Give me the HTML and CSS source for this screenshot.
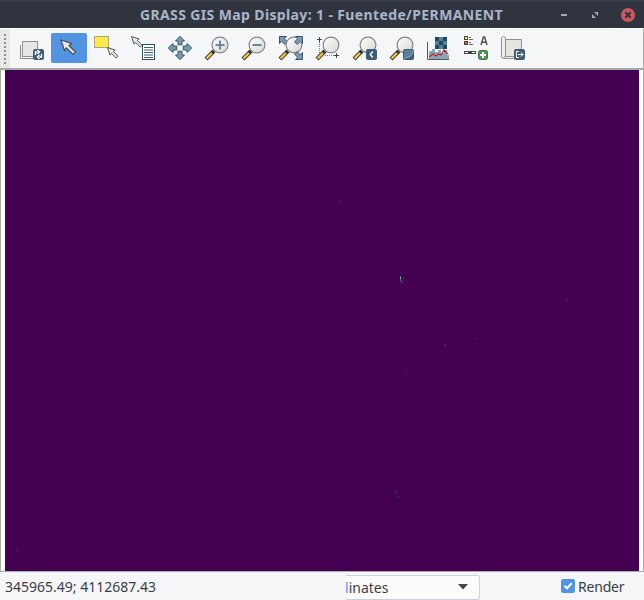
FILE: index.html
```
<!DOCTYPE html>
<html lang="en">
<head>
<meta charset="utf-8">
<title>GRASS GIS Map Display</title>
<link rel="stylesheet" href="styles.css">
</head>
<body>
<svg class="defs" width="0" height="0">
  <defs>
    <linearGradient id="glass" x1="0" y1="0" x2="1" y2="1"><stop offset="0" stop-color="#fff"/><stop offset="1" stop-color="#d5d5d3"/></linearGradient>
    <g id="lens" stroke-width="1">
      <path d="M1 23 9 15" stroke="#333" stroke-width="4"/>
      <path d="M1.6 22.4 7 17" stroke="#f5c83c" stroke-width="2.3"/>
      <circle cx="15" cy="9" r="7.9" fill="url(#glass)" stroke="#858585" stroke-width="1.2"/>
    </g>
    <path id="pointer" d="M0 0 10.5 3.5 8 5.500 14.500 12 12 14.500 5.500 8 3.500 10.500Z"/>
    <path id="arrow" d="M12 .3 16.500 5H14V8.800H10V5H7.500Z"/>
    <path id="corner" d="M.5.5H7.500L5.300 2.700 8.400 5.800 5.800 8.400 2.700 5.300.5 7.500Z"/>
    <rect id="badge" x="13" y="13" width="11" height="11" rx="2"/>
  </defs>
</svg>
<div class="window">
  <header class="titlebar">
    <h1 class="title">GRASS GIS Map Display: 1 - Fuentede/PERMANENT</h1>
    <div class="controls">
      <svg width="80" height="28" fill="#a3a9b5">
        <path d="M2 13h6v2H2Z"/>
        <path d="M35 11h4v4ZM33 13v4h4Z"/>
        <circle cx="69" cy="14" r="7" fill="#cc575d"/>
        <path d="m66.300 11.300 5.400 5.400m0-5.400-5.400 5.400" stroke="#2f343f" stroke-width="2"/>
      </svg>
    </div>
  </header>
  <nav class="toolbar">
    <div class="grip"></div>
    <span class="tool"><svg class="icon"><path d="M.5 9v13.500H14" fill="none" stroke="#8b8b8b"/><rect x="2.500" y="5.500" width="15" height="15" fill="#e6e6e6" stroke="#929292"/><use href="#badge" class="blue"/><path d="M15.500 19v-3h2m0-2 2 2-2 2M21.500 18v3h-2m0-2-2 2 2 2" class="mark"/></svg></span>
    <span class="tool active"><svg class="icon"><use href="#pointer" x="4" y="4" class="pointer"/></svg></span>
    <span class="tool"><svg class="icon"><rect x=".5" y=".5" width="14" height="11" fill="#ffe94e" stroke="#625c38" stroke-dasharray="1 1"/><use href="#pointer" class="pointer small" transform="translate(13.500 11.500) scale(.73)"/></svg></span>
    <span class="tool"><svg class="icon"><use href="#pointer" class="pointer small" transform="translate(.5 .5) scale(.73)"/><rect x="11.500" y="8.500" width="12" height="15" fill="#fff" stroke="#2f4e65"/><path d="M13 11.500h9m-9 2.500h9m-9 2.500h9m-9 2.500h9m-9 2.500h9" stroke="#3f5f75"/></svg></span>
    <span class="tool"><svg class="icon arrows"><use href="#arrow"/><use href="#arrow" transform="rotate(90 12 12)"/><use href="#arrow" transform="rotate(180 12 12)"/><use href="#arrow" transform="rotate(270 12 12)"/></svg></span>
    <span class="tool"><svg class="icon"><use href="#lens"/><path d="M15 4.500v9M10.500 9h9" stroke="#6689a0" stroke-width="2"/></svg></span>
    <span class="tool"><svg class="icon"><use href="#lens"/><path d="M10.500 9h9" stroke="#6689a0" stroke-width="2"/></svg></span>
    <span class="tool"><svg class="icon arrows"><use href="#corner"/><use href="#lens"/><use href="#corner" transform="matrix(-1 0 0 1 24 0)"/><use href="#corner" transform="matrix(-1 0 0 -1 24 24)"/></svg></span>
    <span class="tool"><svg class="icon"><path d="M3.500 6v14M9 19.500h9" fill="none" stroke="#777" stroke-dasharray="1 1"/><use href="#lens"/><path d="M3.500 1v5M1 3.500h5M20.500 17v5M18 19.500h5" stroke="#444"/></svg></span>
    <span class="tool"><svg class="icon"><use href="#lens"/><use href="#badge" class="blue"/><path d="m19.800 15.500-2.500 3 2.500 3" class="mark"/></svg></span>
    <span class="tool"><svg class="icon"><use href="#lens"/><use href="#badge" class="blue"/><path d="M14 14h9q0 7-9 8Z" fill="#5e7d94"/><path d="M14 22c5-.2 8-2 9-7" fill="none" stroke="#9db0be"/></svg></span>
    <span class="tool"><svg class="icon"><path d="M2 23v-8h3v-2h3v3h3v-2h3v3h3v-3h3v5h2v4Z" fill="#86a6b8"/><path d="M8 1h12v12H8Z" fill="#55809a"/><path d="M8 1h4v4H8Zm8 0h4v4h-4Zm-4 4h4v4h-4Zm-4 4h4v4H8Zm8 0h4v4h-4Z" fill="#234761"/><path d="M.5 6v17.500H22" fill="none" stroke="#555"/><path d="m2 21 4-3 3 2 3-2 2 1 3-5 4 4" fill="none" stroke="#c4222b" stroke-width="1.300"/></svg></span>
    <span class="tool"><svg class="icon"><rect x=".5" y=".5" width="3" height="3" fill="#ffe94e" stroke="#454545"/><rect x=".5" y="5.500" width="3" height="3" fill="#e25648" stroke="#454545"/><path d="M5 1.500h2M5 3.500h4M5 6.500h2M5 8.500h4" stroke="#666"/><path d="m17 9 2.400-8h1.200L23 9M18 6.200h4" fill="none" stroke="#555" stroke-width="1.500"/><path d="M0 15h12v3H0Z" fill="#444"/><path d="M1 16h3v1H1Zm7 0h3v1H8Z" fill="#fff"/><rect x="14.500" y="14.500" width="9" height="9" rx="2" fill="#4f9553" stroke="#3e7743"/><path d="M19 16v6m-3-3h6" stroke="#fff" stroke-width="2"/></svg></span>
    <span class="tool"><svg class="icon"><path d="M4.500 3.500H20.500V20.500H4.500Z" fill="#e4e4e2" stroke="#929292"/><path d="M.5 2C.5 0 4.500 0 4.500 2V19C4.500 22 .5 23 .5 21ZM2.500 22.500H14v-2H4" fill="#eee" stroke="#929292"/><use href="#badge" class="blue"/><path d="M18 15.500h-2.500v6H18M17 18.500h5m-2-2 2 2-2 2" class="mark thin"/></svg></span>
  </nav>
  <main class="viewport">
    <svg class="map" width="634" height="501" shape-rendering="crispEdges">
      <path d="M395 206h1v1h-1Z" fill="#2e6a80"/><path d="M395 207h1v1h-1Z" fill="#b8de29"/><path d="M395 208h1v3h-1Z" fill="#24908a"/><path d="M396 211h1v3h-1Z" fill="#414384"/><path d="M397 207h2v6h-2Z" fill="#470f60"/>
      <path d="M391 421h1v1h-1Z" fill="#3d6b91"/><path d="M391 422h1v3h-1Zm1 4h2v2h-2Z" fill="#48185f"/>
      <path d="M440 274h1v1h-1Z" fill="#6a5480"/><path d="M334 131h1v1h-1Zm227 98h1v2h-1Zm-28 26h1v1h-1Zm-62 13h1v1h-1Zm-70 33h1v1h-1Zm4 206h1v1h-1ZM11 480h1v1h-1Z" fill="#5c2a70"/>
    </svg>
  </main>
  <footer class="statusbar">
    <div class="coordinates">345965.49; 4112687.43</div>
    <div class="select"><span class="choice"><span class="selected">l</span>inates</span><svg class="caret" width="10" height="6"><path d="M0 0h10L5 5.500Z" fill="#3f444b"/></svg></div>
    <div class="render"><svg width="14" height="14"><rect width="14" height="14" rx="2" fill="#5294e2"/><path d="m3.500 6.800 2.500 2.500 4.700-5" fill="none" stroke="#fff" stroke-width="2"/></svg><span class="render-label">Render</span></div>
  </footer>
</div>
</body>
</html>
```
FILE: styles.css
```
* { box-sizing: border-box; }
body { margin: 0; background: #f5f6f7; color: #3b4048; font: 14px/20px "Noto Sans", sans-serif; }
.defs { display: block; height: 0; }
.window { width: 644px; height: 600px; display: flex; flex-direction: column; overflow: hidden; }
.titlebar { height: 28px; flex: none; display: flex; align-items: center; padding-left: 140px; background: #2f343f; border-top: 1px solid #3b414d; }
.title { width: 419px; margin: 0; color: #a9b5c8; font: bold 14px/28px "Noto Sans", sans-serif; letter-spacing: .37px; white-space: nowrap; }
.controls { height: 28px; }
.controls svg { display: block; }
.toolbar { height: 42px; flex: none; display: flex; align-items: flex-start; background: #f4f6f8; border-top: 1px solid #fff; border-right: 1px solid #aaa; border-bottom: 2px solid #a9a9a9; }
.grip { width: 10px; height: 39px; margin-right: 4px; padding: 5px 4px; background: #e8e8e7; }
.grip::before { content: ""; display: block; width: 2px; height: 31px; background: repeating-linear-gradient(#8d8d8d 0 2px, transparent 2px 4px); }
.tool { width: 36px; height: 30px; margin: 4px 1px 0 0; flex: none; display: flex; justify-content: center; padding-top: 3px; border-radius: 2px; }
.active { background: #5294e2; }
.icon { display: block; width: 24px; height: 24px; overflow: visible; }
.pointer { fill: #e8e8e5; stroke: #4d4d4d; stroke-width: 1.2; }
.small { stroke-width: 1.3; }
.arrows { fill: #7a9db3; stroke: #33536a; stroke-width: 1; }
.blue { fill: #3d5d75; stroke: none; }
.mark { fill: none; stroke: #fff; stroke-width: 1.4; }
.thin { stroke-width: 1; }
.viewport { height: 502px; flex: none; padding: 0 3px 0 4px; background: #fff; border: solid #aaa; border-width: 0 1px 1px; }
.map { display: block; background: #440154; }
.statusbar { height: 28px; flex: none; display: flex; align-items: center; background: #f4f6f8; }
.coordinates { width: 346px; padding: 2px 0 0 5px; }
.select { width: 134px; height: 25px; margin-top: 2px; display: flex; align-items: center; background: #fcfcfd; border: 1px solid #cbd2e3; border-left: 0; border-radius: 0 3px 3px 0; }
.choice { width: 113px; margin-top: 2px; margin-left: -1px; }
.selected { color: #5294e2; }
.caret { display: block; }
.render { margin-left: 81px; display: flex; align-items: center; gap: 3px; white-space: nowrap; }
.render svg { flex: none; }
.render-label { padding-top: 2px; letter-spacing: -.2px; }
```
